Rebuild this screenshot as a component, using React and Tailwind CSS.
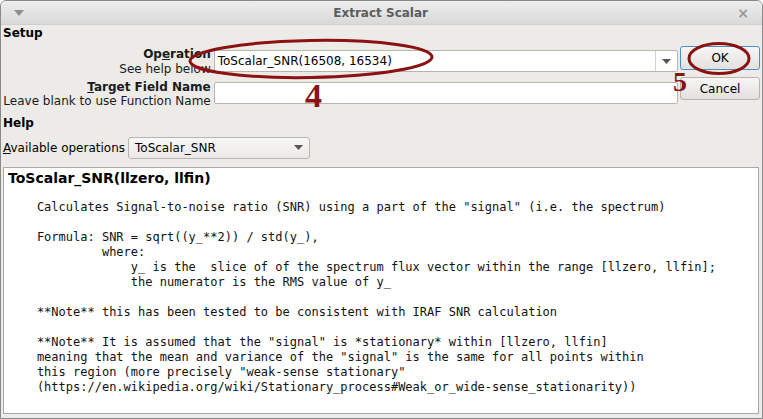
import React from "react";

const mono = { fontFamily: '"DejaVu Sans Mono", monospace' };

const helpText = `    Calculates Signal-to-noise ratio (SNR) using a part of the "signal" (i.e. the spectrum)

    Formula: SNR = sqrt((y_**2)) / std(y_),
             where:
                 y_ is the  slice of of the spectrum flux vector within the range [llzero, llfin];
                 the numerator is the RMS value of y_

    **Note** this has been tested to be consistent with IRAF SNR calculation

    **Note** It is assumed that the "signal" is *stationary* within [llzero, llfin]
    meaning that the mean and variance of the "signal" is the same for all points within
    this region (more precisely "weak-sense stationary"
    (https://en.wikipedia.org/wiki/Stationary_process#Weak_or_wide-sense_stationarity))`;

function Arrow() {
  return (
    <svg width="9" height="5" viewBox="0 0 9 5">
      <path d="M0 0 L9 0 L4.5 5 Z" fill="#555" />
    </svg>
  );
}

export default function App() {
  return (
    <div
      className="relative w-[763px] h-[419px] overflow-hidden bg-[#edebe7] text-[12px] text-black border border-[#8a8a8a] rounded-t-[6px] flex flex-col"
      style={{ fontFamily: '"DejaVu Sans", sans-serif' }}
    >
      {/* title bar */}
      <div className="h-[24px] shrink-0 flex items-center justify-between px-[13px] bg-gradient-to-b from-[#ededed] to-[#d9d9d9] border-b border-[#cfcfcf]">
        <svg width="10" height="6" viewBox="0 0 10 6">
          <path d="M0 0 L10 0 L5 6 Z" fill="#8f8f8f" />
        </svg>
        <div className="font-bold text-[12px] text-[#5c5c5c]">Extract Scalar</div>
        <div className="text-[#9a9a9a] font-bold text-[14px] leading-none">×</div>
      </div>

      <div className="flex-1 flex flex-col px-[2px]">
        <div className="font-bold leading-[15px] pt-[1px]">Setup</div>

        <div className="flex items-start">
          <div className="w-[208px] text-right leading-[15px] text-[#1a1a1a]">
            <div className="pt-[6px] font-bold">
              Op<span className="underline">e</span>ration
            </div>
            <div>See help below</div>
            <div className="pt-[3px] font-bold leading-[14px]">
              <span className="underline">T</span>arget Field Name
            </div>
            <div className="leading-[14px]">Leave blank to use Function Name</div>
          </div>

          <div className="w-[465px] ml-[3px]">
            <div className="mt-[9px] h-[22px] bg-white border border-[#b8b4ae] rounded-[2px] flex items-center">
              <div className="flex-1 px-[3px] text-[12px]">ToScalar_SNR(16508, 16534)</div>
              <div className="w-[22px] h-full border-l border-[#d6d3ce] flex items-center justify-center">
                <Arrow />
              </div>
            </div>
            <div className="mt-[10px] h-[22px] bg-white border border-[#b8b4ae] rounded-[2px]" />
          </div>

          <div className="ml-[2px] w-[80px]">
            <div className="mt-[5px] h-[24px] rounded-[3px] border border-[#4a90c8] bg-gradient-to-b from-[#f6f6f5] to-[#e3e1de] flex items-center justify-center">
              OK
            </div>
            <div className="mt-[7px] h-[23px] rounded-[3px] border border-[#b8b4ae] bg-gradient-to-b from-[#f6f6f5] to-[#e3e1de] flex items-center justify-center">
              Cancel
            </div>
          </div>
        </div>

        <div className="font-bold leading-[15px] mt-[8px]">Help</div>

        <div className="flex items-center mt-[5px] h-[23px]">
          <div>
            <span className="underline">A</span>vailable operations
          </div>
          <div className="ml-[3px] w-[182px] h-[22px] border border-[#b8b4ae] rounded-[3px] bg-gradient-to-b from-[#f7f7f6] to-[#ebe9e6] flex items-center justify-between px-[6px]">
            <span>ToScalar_SNR</span>
            <Arrow />
          </div>
        </div>

        <div className="mt-[8px] mb-[4px] mr-[1px] flex-1 bg-white border border-[#a9a9a9] pl-[4px] pt-[1px]">
          <div className="font-bold text-[14px] leading-[18px]">ToScalar_SNR(llzero, llfin)</div>
          <pre className="mt-[13px] text-[12px] leading-[15px] text-[#111]" style={mono}>
            {helpText}
          </pre>
        </div>
      </div>

      {/* annotations */}
      <svg className="absolute left-0 top-0 pointer-events-none" width="763" height="419">
        <ellipse cx="310" cy="58" rx="121" ry="18.5" fill="none" stroke="#8b1212" strokeWidth="3" transform="rotate(-1 310 58)" />
        <ellipse cx="718" cy="57.5" rx="30" ry="15" fill="none" stroke="#8b1212" strokeWidth="3" />
      </svg>
      <div
        className="absolute left-[304px] top-[78px] text-[34px] leading-none text-[#8b1212] font-bold"
        style={{ fontFamily: '"Liberation Serif", serif' }}
      >
        4
      </div>
      <div
        className="absolute left-[672px] top-[67px] text-[28px] leading-none text-[#8b1212] font-bold"
        style={{ fontFamily: '"Liberation Serif", serif' }}
      >
        5
      </div>
    </div>
  );
}
